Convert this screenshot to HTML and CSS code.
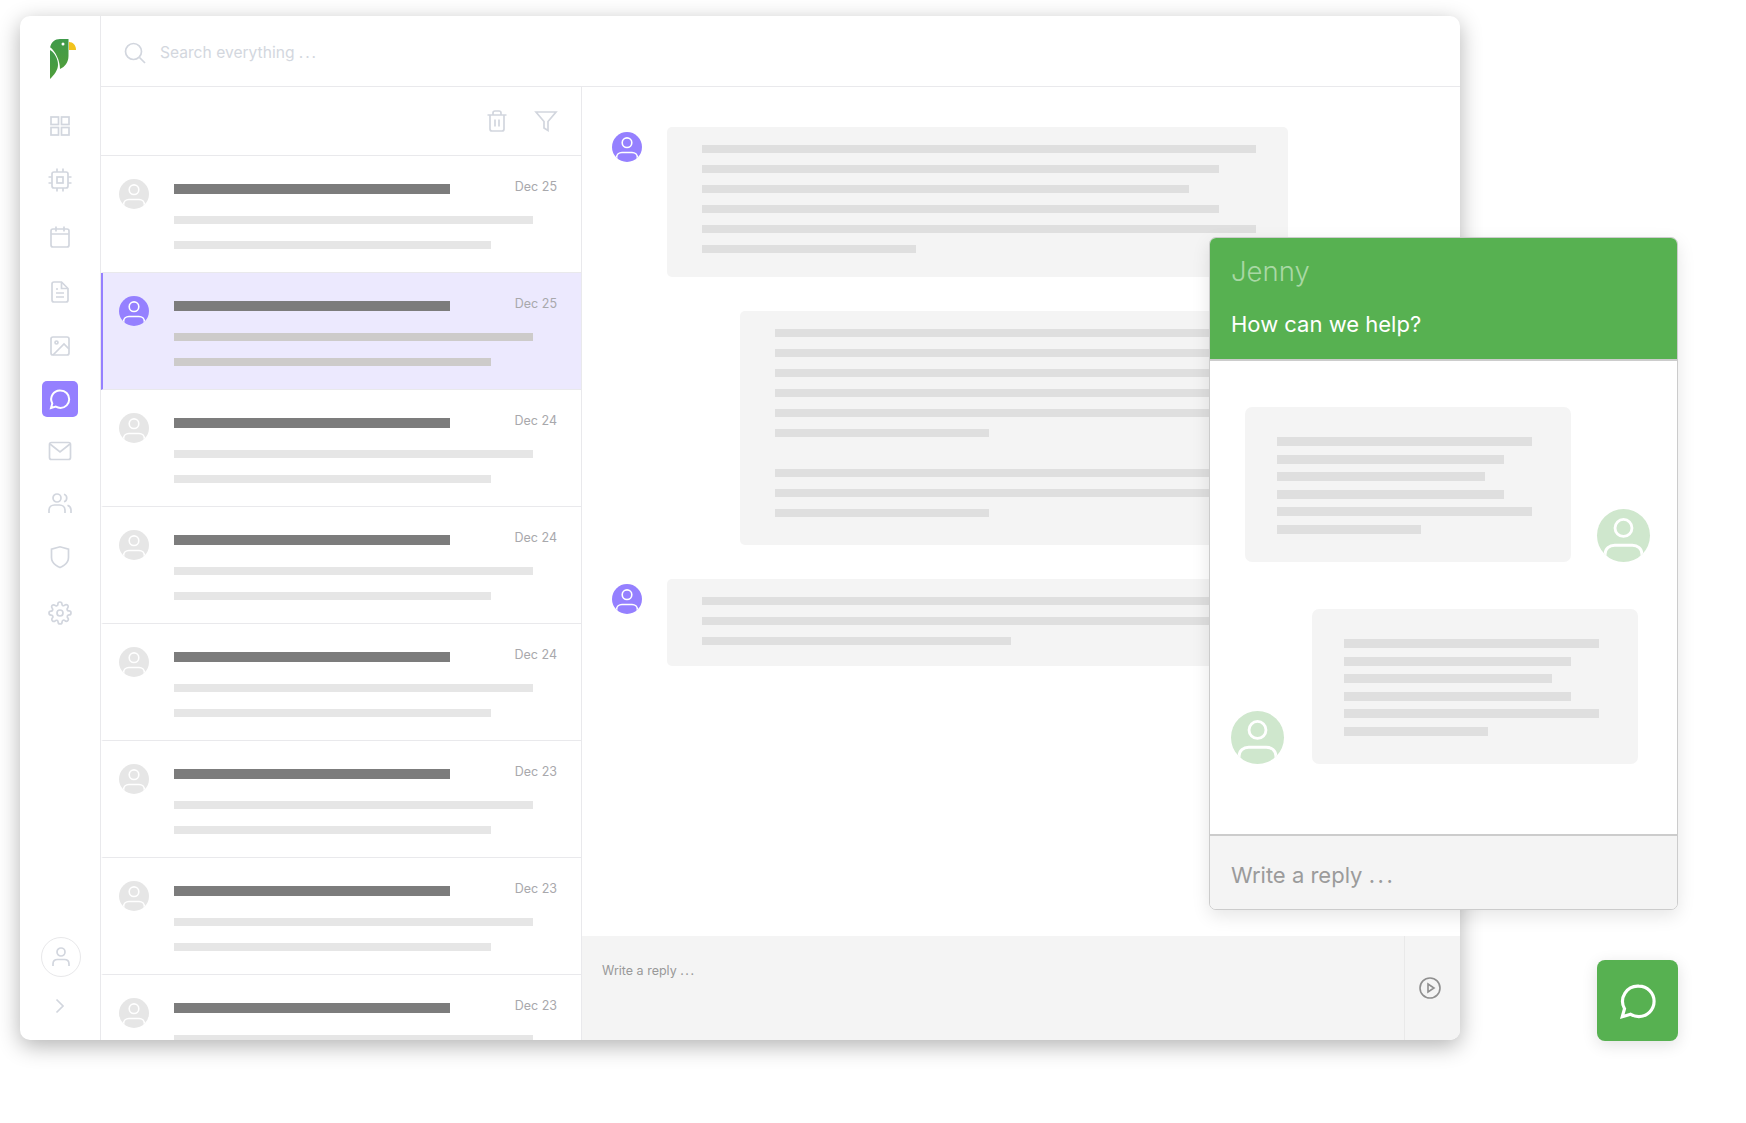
FILE: index.html
```html
<!DOCTYPE html>
<html lang="en">
<head>
    <meta charset="UTF-8">
    <meta name="viewport" content="width=device-width, initial-scale=1.0">
    <title>Messages</title>
    <link rel="stylesheet" href="styles.css">
</head>
<body>

<svg width="0" height="0" class="defs">
    <defs>
        <linearGradient id="parrot" x1="0" y1="0" x2="0" y2="1">
            <stop offset="0" stop-color="#3f9a4a"/>
            <stop offset="1" stop-color="#4f9e3b"/>
        </linearGradient>
        <symbol id="person" viewBox="0 0 30 30">
            <circle cx="15" cy="10.700" r="4.800" fill="none" stroke="#fff" stroke-width="1.600"/>
            <path d="M4.600 31v-5.500c0-3 2.400-5 5.400-5h10c3 0 5.400 2 5.400 5V31" fill="none" stroke="#fff" stroke-width="1.600"/>
        </symbol>
    </defs>
</svg>

<div class="app">
    <!-- sidebar -->
    <nav class="sidebar">
        <svg class="logo" width="26" height="40" viewBox="0 0 26 40">
            <path d="M0 9C1 3 5 0 10 0h8.500v17c0 6-3.500 11-8.500 13C10 22 6 13 0 8z" fill="url(#parrot)"/>
            <path d="M0 11c5 3 8 9 8 15 0 5-4 10-8 14z" fill="url(#parrot)"/>
            <circle cx="13" cy="5" r="1.500" fill="#fff"/>
            <path d="M19 3c4 0 7 3 7 8h-7z" fill="#f2c31c"/>
        </svg>
        <ul class="nav-list">
            <li class="nav-item grid-icon"><svg width="24" height="24" viewBox="0 0 24 24"><rect x="3" y="3" width="7.500" height="7.500"/><rect x="13.500" y="3" width="7.500" height="7.500"/><rect x="3" y="13.500" width="7.500" height="7.500"/><rect x="13.500" y="13.500" width="7.500" height="7.500"/></svg></li>
            <li class="nav-item chip-icon"><svg width="24" height="24" viewBox="0 0 24 24"><rect x="4" y="4" width="16" height="16" rx="2"/><rect x="9" y="9" width="6" height="6"/><path d="M9 .5V4M15 .5V4M9 20v3.500M15 20v3.500M20 9h3.500M20 15h3.500M.5 9H4M.5 15H4"/></svg></li>
            <li class="nav-item cal-icon"><svg width="24" height="24" viewBox="0 0 24 24"><rect x="3" y="4" width="18" height="18" rx="2"/><path d="M16 1.500v5M8 1.500v5M3 9h18"/></svg></li>
            <li class="nav-item doc-icon"><svg width="24" height="24" viewBox="0 0 24 24"><path d="M13.500 2H6a2 2 0 0 0-2 2v16a2 2 0 0 0 2 2h12a2 2 0 0 0 2-2V8.500z"/><path d="M13.500 2v6.500H20M16 13H8M16 17H8M10 9H8"/></svg></li>
            <li class="nav-item img-icon"><svg width="24" height="24" viewBox="0 0 24 24"><rect x="3" y="3" width="18" height="18" rx="2"/><circle cx="8.500" cy="8.500" r="1.500"/><path d="M21 15l-5-5L5 21"/></svg></li>
            <li class="nav-item chat-icon active"><svg width="24" height="24" viewBox="0 0 24 24"><path d="M12.500 3.500a8.700 8.700 0 0 1 0 17.400c-1.800 0-3.400-.5-4.700-1.300L3 21l1.300-4.600a8.700 8.700 0 0 1 8.200-12.900z"/></svg></li>
            <li class="nav-item mail-icon"><svg width="24" height="24" viewBox="0 0 24 24"><rect x="1.500" y="3.500" width="21" height="17" rx="2"/><path d="M2 5l10 8 10-8"/></svg></li>
            <li class="nav-item users-icon"><svg width="24" height="24" viewBox="0 0 24 24"><circle cx="9" cy="7" r="4"/><path d="M1 22v-2.500c0-3.500 2.500-5.500 5.500-5.500h5c3 0 5.500 2 5.500 5.500V22M16 3.200a4 4 0 0 1 0 7.600M19.500 14.300c2 .7 3.500 2.400 3.500 5V22"/></svg></li>
            <li class="nav-item shield-icon"><svg width="24" height="24" viewBox="0 0 24 24"><path d="M12 22.500s-8.500-3-8.500-10V4.200L12 1.800l8.500 2.400v8.300c0 7-8.500 10-8.500 10z"/></svg></li>
            <li class="nav-item gear-icon"><svg width="24" height="24" viewBox="0 0 24 24"><circle cx="12" cy="12" r="3"/><path d="M19.400 15a1.650 1.650 0 0 0 .33 1.820l.06.06a2 2 0 1 1-2.830 2.830l-.06-.06a1.650 1.650 0 0 0-2.800 1.170V21a2 2 0 0 1-4 0v-.09a1.650 1.650 0 0 0-2.800-1.170l-.06.06a2 2 0 1 1-2.830-2.830l.06-.06a1.650 1.650 0 0 0-1.170-2.800H3a2 2 0 0 1 0-4h.09a1.650 1.650 0 0 0 1.170-2.800l-.06-.06a2 2 0 1 1 2.830-2.830l.06.06a1.650 1.650 0 0 0 2.800-1.170V3a2 2 0 0 1 4 0v.09a1.650 1.650 0 0 0 2.800 1.170l.06-.06a2 2 0 1 1 2.830 2.830l-.06.06a1.650 1.650 0 0 0 1.170 2.800H21a2 2 0 0 1 0 4h-.09a1.650 1.650 0 0 0-1.510 1z"/></svg></li>
        </ul>
        <div class="me">
            <svg width="20" height="22" viewBox="0 0 20 22"><circle cx="10" cy="6" r="4"/><path d="M2 20v-2c0-3 2-4.500 4.500-4.500h7c2.500 0 4.500 1.500 4.500 4.500v2"/></svg>
        </div>
        <svg class="expand" width="10" height="16" viewBox="0 0 10 16"><path d="M1.500 1.500L8 8l-6.500 6.500"/></svg>
    </nav>

    <div class="main">
        <header class="topbar">
            <svg class="search-icon" width="22" height="22" viewBox="0 0 22 22"><circle cx="9.500" cy="9.500" r="8"/><path d="M15.500 15.500l5.500 5.500"/></svg>
            <span class="search-text">Search everything <span class="dots">...</span></span>
        </header>

        <div class="panes">
            <!-- conversation list -->
            <section class="list">
                <div class="list-tools">
                    <svg width="24" height="24" viewBox="0 0 24 24"><path d="M2.500 6h19M8 6V4a2 2 0 0 1 2-2h4a2 2 0 0 1 2 2v2M19 6v14a2 2 0 0 1-2 2H7a2 2 0 0 1-2-2V6M10 10.500v7M14 10.500v7"/></svg>
                    <svg width="24" height="24" viewBox="0 0 24 24"><path d="M22 3H2l8 9.500V19l4 2.500v-9z"/></svg>
                </div>
                <div class="rows" id="rows"></div>
            </section>

            <!-- messages -->
            <section class="thread">
                <div class="messages">
                    <div class="msg">
                        <svg class="avatar purple"><use href="#person"/></svg>
                        <div class="bubble">
                            <i class="w1"></i><i class="w2"></i><i class="w3"></i><i class="w2"></i><i class="w1"></i><i class="w4"></i>
                        </div>
                    </div>
                    <div class="msg indent">
                        <div class="bubble long">
                            <i class="w1"></i><i class="w2"></i><i class="w3"></i><i class="w2"></i><i class="w1"></i><i class="w4"></i>
                            <i class="gap"></i>
                            <i class="w1"></i><i class="w2"></i><i class="w4"></i>
                        </div>
                    </div>
                    <div class="msg">
                        <svg class="avatar purple"><use href="#person"/></svg>
                        <div class="bubble short">
                            <i class="w1"></i><i class="w1"></i><i class="w5"></i>
                        </div>
                    </div>
                </div>
                <div class="reply">
                    <div class="reply-input">Write a reply <span class="dots">...</span></div>
                    <div class="reply-send">
                        <svg width="24" height="24" viewBox="0 0 24 24"><circle cx="12" cy="12" r="10"/><path d="M10 8l6 4-6 4z"/></svg>
                    </div>
                </div>
            </section>
        </div>
    </div>
</div>

<!-- chat widget -->
<div class="widget">
    <div class="widget-head">
        <div class="widget-name">Jenny</div>
        <div class="widget-help">How can we help?</div>
    </div>
    <div class="widget-body">
        <div class="wmsg right">
            <div class="wbubble">
                <i class="x1"></i><i class="x2"></i><i class="x3"></i><i class="x2"></i><i class="x1"></i><i class="x4"></i>
            </div>
            <svg class="wavatar"><use href="#person"/></svg>
        </div>
        <div class="wmsg left">
            <svg class="wavatar"><use href="#person"/></svg>
            <div class="wbubble">
                <i class="x1"></i><i class="x2"></i><i class="x3"></i><i class="x2"></i><i class="x1"></i><i class="x4"></i>
            </div>
        </div>
    </div>
    <div class="widget-foot">Write a reply <span class="dots">...</span></div>
</div>

<div class="fab">
    <svg width="42" height="42" viewBox="0 0 24 24"><path d="M12.500 3.500a8.700 8.700 0 0 1 0 17.400c-1.800 0-3.400-.5-4.700-1.300L3 21l1.300-4.600a8.700 8.700 0 0 1 8.200-12.900z"/></svg>
</div>

<script>
    // 一覧の行を生成
    const dates = ['Dec 25', 'Dec 25', 'Dec 24', 'Dec 24', 'Dec 24', 'Dec 23', 'Dec 23', 'Dec 23'];
    const rows = document.getElementById('rows');
    dates.forEach((date, index) => {
        const row = document.createElement('div');
        row.className = index === 1 ? 'row selected' : 'row';
        row.innerHTML = `
            <svg class="avatar"><use href="#person"/></svg>
            <div class="row-body">
                <div class="row-head">
                    <div class="row-title"></div>
                    <span class="row-date">${date}</span>
                </div>
                <div class="row-line"></div>
                <div class="row-line shorter"></div>
            </div>
        `;
        rows.appendChild(row);
    });
</script>

</body>
</html>
```
FILE: styles.css
```css
* {
    box-sizing: border-box;
}
html, body {
    height: 100%;
}
body {
    font-family: Inter, "Liberation Sans", sans-serif;
    margin: 0;
    background: #fff;
    overflow: hidden;
    position: relative;
}
.defs {
    position: absolute;
}
.dots {
    letter-spacing: 0.12em;
}
.app {
    display: flex;
    width: 1440px;
    height: 1024px;
    margin: 16px 0 0 20px;
    background: #fff;
    border-radius: 10px;
    overflow: hidden;
    box-shadow: 0 6px 22px rgba(0, 0, 0, 0.3);
}
.sidebar {
    width: 81px;
    flex: none;
    display: flex;
    flex-direction: column;
    align-items: center;
    border-right: 1px solid #e9e9ec;
    padding: 23px 0 0;
}
.logo {
    flex: none;
    margin-left: 6px;
}
.nav-list {
    list-style: none;
    margin: 29px 0 0;
    padding: 0;
    display: flex;
    flex-direction: column;
    flex: 1;
    align-items: center;
}
.nav-item {
    width: 36px;
    height: 36px;
    margin-bottom: 18px;
    display: flex;
    align-items: center;
    justify-content: center;
    border-radius: 5px;
}
.nav-item svg {
    fill: none;
    stroke: #d2d6de;
    stroke-width: 1.700;
}
.nav-item.active {
    background: #9580ff;
}
.nav-item.active svg {
    stroke: #fff;
    stroke-width: 2;
}
.cal-icon { margin-top: 3px; }
.doc-icon { margin-top: 1px; }
.chat-icon { margin-top: -1px; }
.mail-icon { margin-top: -2px; }
.users-icon { margin-top: -2px; }
.gear-icon { margin-top: 2px; }
.me {
    width: 40px;
    height: 40px;
    border: 1.500px solid #e8e8ea;
    border-radius: 50%;
    display: flex;
    align-items: center;
    justify-content: center;
    margin-left: 2px;
}
.me svg, .expand {
    fill: none;
    stroke: #d2d6de;
    stroke-width: 1.700;
}
.expand {
    margin: 21px 0 26px;
}
.main {
    flex: 1;
    display: flex;
    flex-direction: column;
    min-width: 0;
}
.topbar {
    height: 71px;
    flex: none;
    border-bottom: 1px solid #e9e9ec;
    display: flex;
    align-items: center;
    padding: 3px 0 0 23px;
}
.search-icon {
    fill: none;
    stroke: #d2d6de;
    stroke-width: 1.700;
}
.search-text {
    margin-left: 14px;
    font-size: 15.600px;
    color: #d3d7de;
}
.panes {
    flex: 1;
    display: flex;
    min-height: 0;
}
.list {
    width: 481px;
    flex: none;
    border-right: 1px solid #e9e9ec;
    display: flex;
    flex-direction: column;
    overflow: hidden;
}
.list-tools {
    height: 69px;
    flex: none;
    border-bottom: 1px solid #e9e9ec;
    display: flex;
    justify-content: flex-end;
    gap: 25px;
    padding: 22px 23px 0 0;
}
.list-tools svg {
    fill: none;
    stroke: #d2d6de;
    stroke-width: 1.700;
}
.row {
    height: 117px;
    flex: none;
    display: flex;
    align-items: flex-start;
    gap: 25px;
    padding: 23px 0 0 16px;
    border-bottom: 1px solid #e9e9ec;
    border-left: 2px solid transparent;
}
.row.selected {
    background: #ece9fe;
    border-left-color: #9580ff;
}
.avatar {
    width: 30px;
    height: 30px;
    flex: none;
    border-radius: 50%;
    background: #e6e6e6;
}
.avatar.purple, .row.selected .avatar {
    background: #9580ff;
}
.row-body {
    flex: none;
    width: 383px;
}
.row-head {
    display: flex;
    justify-content: space-between;
    align-items: flex-start;
    height: 15px;
}
.row-title {
    width: 276px;
    height: 10px;
    margin-top: 5px;
    background: #7c7c7c;
}
.row-date {
    font-size: 12.500px;
    line-height: 16px;
    color: #a8a8ac;
    white-space: nowrap;
}
.row-line {
    width: 359px;
    height: 8px;
    margin-top: 22px;
    background: #e6e6e6;
}
.row-line.shorter {
    width: 317px;
    margin-top: 17px;
}
.row.selected .row-line {
    background: #cdcbca;
}
.thread {
    flex: 1;
    display: flex;
    flex-direction: column;
    min-width: 0;
}
.messages {
    flex: 1;
    padding: 40px 0 0 30px;
    display: flex;
    flex-direction: column;
}
.msg {
    display: flex;
    align-items: flex-start;
    gap: 25px;
}
.msg .avatar {
    margin-top: 5px;
}
.msg.indent {
    margin: 34px 0 34px 128px;
}
.bubble {
    width: 621px;
    height: 150px;
    padding: 18px 35px 0;
    background: #f4f4f4;
    border-radius: 5px;
}
.bubble.long {
    height: 234px;
}
.bubble.short {
    height: 87px;
}
.bubble i {
    display: block;
    height: 8px;
    margin-bottom: 12px;
    background: #dfdfdf;
}
.bubble i.gap {
    height: 20px;
    background: none;
    margin-bottom: 0;
}
.w1 { width: 554px; }
.w2 { width: 517px; }
.w3 { width: 487px; }
.w4 { width: 214px; }
.w5 { width: 309px; }
.reply {
    height: 104px;
    flex: none;
    display: flex;
    background: #f4f4f4;
}
.reply-input {
    flex: 1;
    padding: 26px 0 0 20px;
    font-size: 12.500px;
    line-height: 18px;
    color: #999;
    border-right: 1.500px solid #e9e9e9;
}
.reply-send {
    width: 55px;
    flex: none;
    display: flex;
    align-items: center;
    justify-content: center;
    padding-right: 5px;
}
.reply-send svg {
    fill: none;
    stroke: #8f8f8f;
    stroke-width: 1.600;
}
/* chat widget, lies over the app card */
.widget {
    position: absolute;
    left: 1209px;
    top: 237px;
    width: 469px;
    height: 673px;
    display: flex;
    flex-direction: column;
    background: #fff;
    border: 1px solid #ccc;
    border-radius: 7px;
    overflow: hidden;
    box-shadow: 0 6px 18px rgba(0, 0, 0, 0.1);
}
.widget-head {
    height: 123px;
    flex: none;
    background: #57b151;
    border-bottom: 2px solid #ccc;
    padding: 16px 21px 0;
}
.widget-name {
    font-size: 27.500px;
    line-height: 34px;
    font-weight: 300;
    color: #a9d8a5;
}
.widget-help {
    margin-top: 21px;
    font-size: 22px;
    line-height: 30px;
    color: #fff;
}
.widget-body {
    flex: 1;
    border-bottom: 2px solid #ccc;
    padding: 46px 0 0;
}
.wmsg {
    display: flex;
    align-items: flex-end;
}
.wmsg.right {
    padding-left: 35px;
    gap: 26px;
}
.wmsg.left {
    margin-top: 47px;
    padding-left: 21px;
    gap: 28px;
}
.wbubble {
    width: 326px;
    height: 155px;
    padding: 30px 32px 0;
    background: #f4f4f4;
    border-radius: 7px;
}
.wbubble i {
    display: block;
    height: 9px;
    margin-bottom: 8.600px;
    background: #dfdfdf;
}
.x1 { width: 255px; }
.x2 { width: 227px; }
.x3 { width: 208px; }
.x4 { width: 144px; }
.wavatar {
    width: 53px;
    height: 53px;
    flex: none;
    border-radius: 50%;
    background: #cfe7cd;
}
.widget-foot {
    height: 73px;
    flex: none;
    background: #f4f4f4;
    padding: 24px 21px 0;
    font-size: 22px;
    line-height: 30px;
    color: #9b9b9b;
}
.fab {
    position: absolute;
    left: 1597px;
    top: 960px;
    width: 81px;
    height: 81px;
    display: flex;
    align-items: center;
    justify-content: center;
    background: #57b151;
    border-radius: 8px;
    box-shadow: 0 4px 16px rgba(0, 0, 0, 0.12);
}
.fab svg {
    fill: none;
    stroke: #fff;
    stroke-width: 1.800;
}
```
